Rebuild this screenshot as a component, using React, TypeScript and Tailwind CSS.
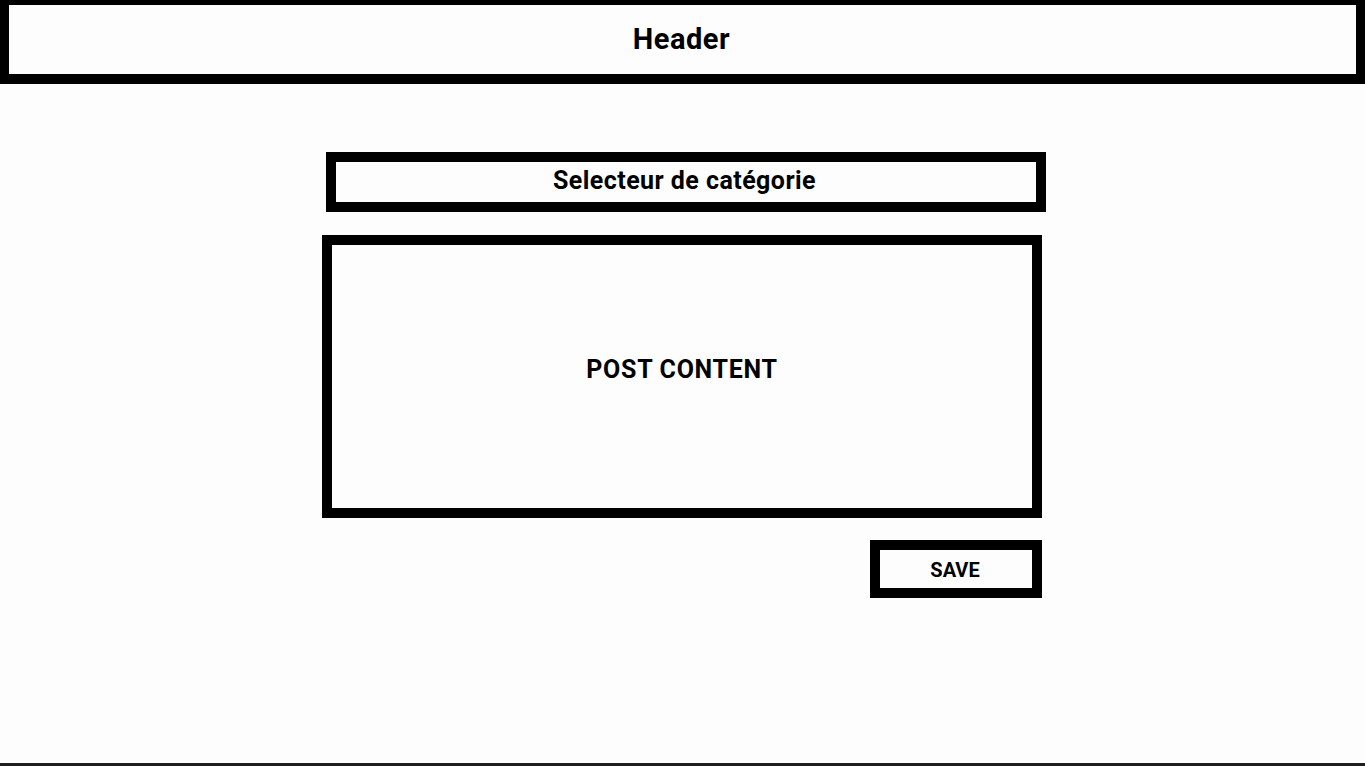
export default function App() {
  return (
    <div
      className="flex flex-col h-[766px] bg-[#fdfdfd] text-black"
      style={{ fontFamily: "Roboto, 'Liberation Sans', sans-serif" }}
    >
      {/* Header */}
      <header className="h-[84px] bg-black pt-[5px] px-[9px] pb-[10px]">
        <div className="h-full bg-[#fdfdfd] flex items-center justify-center">
          <h1 className="text-[29px] font-bold leading-none tracking-[0.5px] pr-[2px]">Header</h1>
        </div>
      </header>

      <main className="flex-1 pt-[68px]">
        <div className="w-[720px] ml-[322px] flex flex-col">
          {/* Category selector */}
          <div className="ml-[4px] mr-[-4px] h-[60px] border-[10px] border-black flex items-center justify-center pb-[4px] pr-[3px]">
            <span className="text-[25px] font-bold leading-none tracking-[0.45px]">
              Selecteur de catégorie
            </span>
          </div>

          {/* Post content */}
          <div className="mt-[23px] h-[283px] border-[10px] border-black flex items-center justify-center pb-[15px]">
            <span className="text-[25px] font-bold leading-none tracking-[0.7px]">POST CONTENT</span>
          </div>

          <div className="mt-[22px] flex justify-end">
            <button className="w-[172px] h-[58px] border-[10px] border-black flex items-center justify-center pt-[2px] pr-[2px]">
              <span className="text-[20px] font-bold leading-none">SAVE</span>
            </button>
          </div>
        </div>
      </main>

      <div className="h-[3px] bg-[#1e1e1e]" />
    </div>
  );
}
